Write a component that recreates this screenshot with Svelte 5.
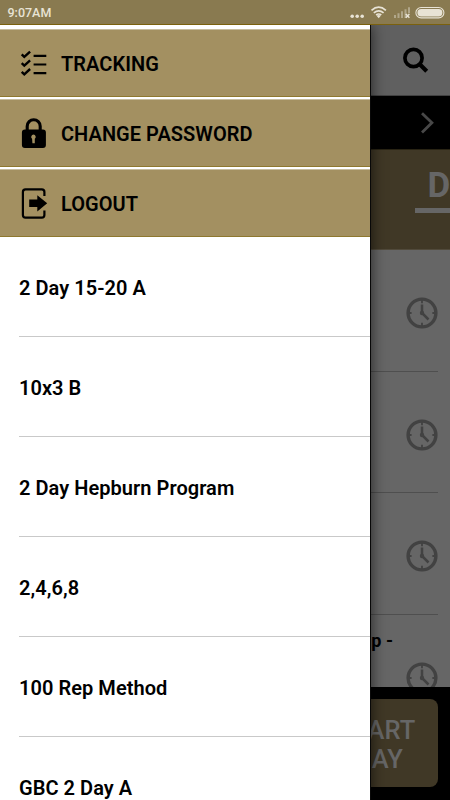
<script>
  const programs = ['2 Day 15-20 A', '10x3 B', '2 Day Hepburn Program', '2,4,6,8', '100 Rep Method', 'GBC 2 Day A'];
  const actions = [
    { label: 'TRACKING', icon: 'list' },
    { label: 'CHANGE PASSWORD', icon: 'lock' },
    { label: 'LOGOUT', icon: 'exit' }
  ];
  const exercises = ['', '', '', 'p -'];
</script>

<div class="screen">
  <div class="status">
    <span class="time">9:07AM</span>
    <svg width="100" height="24" viewBox="0 0 100 24" fill="none" stroke="#e8e3d5">
      <g fill="#e8e3d5" stroke="none"><circle cx="2.2" cy="16.2" r="1.8" /><circle cx="7.2" cy="16.2" r="1.8" /><circle cx="12.2" cy="16.2" r="1.8" /></g>
      <path d="M21.5 10.4Q28.7 4 35.9 10.4M23.8 12.8Q28.7 8.8 33.6 12.8M26.1 15Q28.7 13 31.3 15" stroke-width="1.7" />
      <path d="M26.6 15.8Q28.7 14.2 30.8 15.8L28.7 18.3Z" fill="#e8e3d5" stroke="none" />
      <path d="M45 15v3M48.5 13.2V18M52 11.3V18M55.5 9.3V18M59 7.3v6" stroke="#b1a78a" stroke-width="2" />
      <path d="M55.8 14l3.6 3.8M59.4 14l-3.6 3.8" stroke-width="1.5" />
      <rect x="65.9" y="7.5" width="28" height="10.4" rx="5.2" stroke-width="1.1" />
      <rect x="67.4" y="9" width="25" height="7.4" rx="3.7" fill="#e8e3d5" stroke="none" />
    </svg>
  </div>

  <div class="body">
    <main>
      <header>
        <svg width="28" height="28" viewBox="0 0 28 28" fill="none" stroke="#000">
          <circle cx="11.5" cy="11" r="8.6" stroke-width="3.7" /><path d="M17.5 17l7.2 7.2" stroke-width="4.2" />
        </svg>
      </header>
      <div class="day-nav">
        <svg width="14" height="22" viewBox="0 0 14 22"><path d="M2 1.2L11.9 10.8L2 20.4" fill="none" stroke="#484848" stroke-width="2.8" /></svg>
      </div>
      <div class="tabs"><div class="tab">D</div></div>
      <div class="exercises">
        {#each exercises as name}
          <div class="exercise">
            <b>{name}</b>
            <svg width="32" height="32" viewBox="0 0 32 32" fill="none" stroke="#424242">
              <circle cx="16" cy="16" r="13.9" stroke-width="3.4" />
              <path d="M16 3v3.2M16 25.8V29M3 16h2.6M26.4 16H29" stroke-width="1.8" />
              <path d="M16 7.5V16l6.5 6.5" stroke-width="2.5" /><circle cx="16" cy="16" r="2.2" fill="#424242" stroke="none" />
            </svg>
          </div>
        {/each}
      </div>
      <footer><button><span class="start">START</span><span class="day">DAY</span></button></footer>
    </main>

    <aside>
      {#each actions as action}
        <div class="action">
          <svg width="30" height="34" viewBox="0 0 30 34" fill="none" stroke="#000">
            {#if action.icon === 'list'}
              <path d="M13.6 9.9h12.7M13.6 18.5h12.7M13.6 27.1h12.7" stroke-width="2.2" />
              <path d="M1.7 8.4l2.6 2.5 5.8-5.3M1.7 17.1l2.6 2.5 5.8-5.3M1.7 25.8l2.6 2.5 5.8-5.3" stroke-width="2.4" />
            {:else if action.icon === 'lock'}
              <path d="M7.2 15V10.2a6.5 6.5 0 0 1 13 0V15" stroke-width="3.1" />
              <path fill="#000" stroke="none" fill-rule="evenodd" d="M4.9 13.6h18a3 3 0 0 1 3 3V29a3 3 0 0 1-3 3h-18a3 3 0 0 1-3-3V16.6a3 3 0 0 1 3-3zM13.5 18.4a2.5 2.5 0 0 0-1.4 4.4l.3 4.4h2.4v-4.4a2.5 2.5 0 0 0-1.3-4.4z" />
            {:else}
              <path d="M24.4 10V6q0-2.6-2.6-2.6H5.5Q2.9 3.4 2.9 6v23q0 2.6 2.6 2.6h16.3q2.6 0 2.6-2.6v-4.5" stroke-width="2.2" />
              <path d="M9.2 13.6h8.1V9.2L27.2 17.3L17.3 25.4v-4.5H9.2z" fill="#000" stroke="none" />
            {/if}
          </svg>
          <span>{action.label}</span>
        </div>
      {/each}
      <div class="programs">
        {#each programs as program}
          <div class="program">{program}</div>
        {/each}
      </div>
    </aside>
  </div>
</div>

<style>
  :global(body) { margin: 0; }
  .screen { width: 450px; height: 800px; overflow: hidden; display: flex; flex-direction: column; font-family: Roboto, sans-serif; color: #000; }
  .status { box-sizing: border-box; flex: none; height: 25px; padding: 0 0 0 7.5px; display: flex; justify-content: space-between; background: #897a50; border-bottom: 1px solid #7b610d; color: #e8e3d5; }
  .time { font-size: 12.5px; line-height: 25px; font-weight: 500; }
  .body { flex: 1; min-height: 0; position: relative; }
  main { height: 100%; display: flex; flex-direction: column; background: #666; }
  header { box-sizing: border-box; flex: none; height: 71px; padding: 22px 20px 0 0; display: flex; justify-content: flex-end; background: #606060; border-bottom: 1px solid #414141; }
  .day-nav { flex: none; height: 53px; padding-right: 16px; display: flex; align-items: center; justify-content: flex-end; background: #000; }
  .tabs { box-sizing: border-box; flex: none; height: 101px; padding: 16px 0 0 415px; background: #403826; border-top: 1px solid #292414; border-bottom: 1px solid #514a3b; }
  .tab { box-sizing: border-box; width: 35px; height: 47px; border-bottom: 5px solid #666; padding-left: 12.5px; color: #666; font-size: 35px; line-height: 40px; font-weight: 700; }
  .exercises { flex: 1; min-height: 0; overflow: hidden; padding-right: 12px; }
  .exercise { box-sizing: border-box; height: 121.6px; padding-top: 14px; border-bottom: 1px solid #4f4f4f; display: flex; flex-direction: column; align-items: flex-end; }
  .exercise b { height: 24px; margin-right: 45px; font-size: 18px; line-height: 24px; font-weight: 700; }
  .exercise svg { margin-top: 9px; flex: none; }
  footer { box-sizing: border-box; flex: none; height: 113px; padding: 12px 12px 13px; display: flex; justify-content: flex-end; background: #000; }
  button { box-sizing: border-box; width: 122px; height: 88px; border: 0; border-radius: 8px; padding: 3px 0 0; text-align: center; background: #403826; color: #666; font: 500 25.5px/29px Roboto, sans-serif; }
  button span { display: block; }
  .start { padding-right: 1px; }
  .day { padding-left: 4px; }
  aside { position: absolute; left: 0; top: 0; width: 370px; height: 775px; overflow: hidden; background: #fff; box-shadow: 1px 0 0 #080808, 1px 0 14px rgba(0,0,0,.65); clip-path: inset(0 -20px 0 0); }
  .action { box-sizing: border-box; height: 68px; margin-top: 2px; padding-left: 20px; display: flex; align-items: center; gap: 11px; background: #a39061; border-top: 1px solid #c7bd9f; border-bottom: 1px solid #8e782f; font-size: 20px; font-weight: 600; letter-spacing: .04px; }
  .action:first-child { margin-top: 4px; }
  .action span { padding-top: 1px; }
  .programs { padding-left: 19px; }
  .program { box-sizing: border-box; height: 100px; padding-top: 2px; display: flex; align-items: center; border-bottom: 1px solid #c9c9c9; font-size: 20px; font-weight: 600; letter-spacing: .05px; }
</style>
